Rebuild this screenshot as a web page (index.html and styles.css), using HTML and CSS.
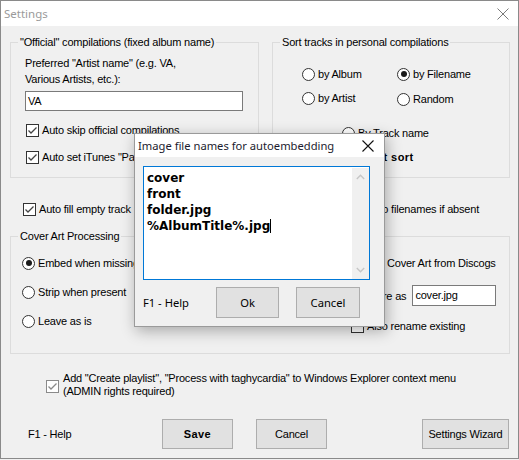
FILE: index.html
```html
<!DOCTYPE html>
<html>
<head>
<meta charset="utf-8">
<title>Settings</title>
<link rel="stylesheet" href="styles.css">
</head>
<body>
<div class="window">
  <div class="titlebar">
    <span class="title">Settings</span>
    <svg class="close" width="12" height="12" viewBox="0 0 12 12"><path d="M0.5 0.5 L11.5 11.5 M11.5 0.5 L0.5 11.5" stroke="#7a7a7a" stroke-width="1" fill="none"/></svg>
  </div>
  <div class="content">
    <div class="top-row">
      <fieldset class="group">
        <legend>"Official" compilations (fixed album name)</legend>
        <div class="body body-official">
          <div class="two-line">Preferred "Artist name" (e.g. VA,<br>Various Artists, etc.):</div>
          <div class="input input-artist">VA</div>
          <div class="check-row first"><span class="box"><svg width="11" height="11" viewBox="0 0 11 11"><path d="M1.5 5.5 L4 8 L9.5 2.5" stroke="#444" stroke-width="1.3" fill="none"/></svg></span><span>Auto skip official compilations</span></div>
          <div class="check-row"><span class="box"><svg width="11" height="11" viewBox="0 0 11 11"><path d="M1.5 5.5 L4 8 L9.5 2.5" stroke="#444" stroke-width="1.3" fill="none"/></svg></span><span>Auto set iTunes "Part of a compilation" flag</span></div>
        </div>
      </fieldset>
      <fieldset class="group">
        <legend>Sort tracks in personal compilations</legend>
        <div class="body body-sort">
          <div class="radio-grid">
            <div class="radio-row"><span class="radio"></span><span>by Album</span></div>
            <div class="radio-row"><span class="radio on"></span><span>by Filename</span></div>
            <div class="radio-row"><span class="radio"></span><span>by Artist</span></div>
            <div class="radio-row shift"><span class="radio"></span><span>Random</span></div>
          </div>
          <div class="radio-col">
            <div class="radio-row"><span class="radio"></span><span>By Track name</span></div>
            <div class="radio-row"><span class="radio"></span><b class="bold-label">Don't sort</b></div>
          </div>
        </div>
      </fieldset>
    </div>

    <div class="fill-row">
      <div class="check-row inline"><span class="box"><svg width="11" height="11" viewBox="0 0 11 11"><path d="M1.5 5.5 L4 8 L9.5 2.5" stroke="#444" stroke-width="1.3" fill="none"/></svg></span><span>Auto fill empty track</span></div>
      <span>Add track numbers to filenames if absent</span>
    </div>

    <fieldset class="group cover-group">
      <legend>Cover Art Processing</legend>
      <div class="body body-cover">
        <div class="cover-left">
          <div class="radio-row"><span class="radio on"></span><span>Embed when missing</span></div>
          <div class="radio-row"><span class="radio"></span><span>Strip when present</span></div>
          <div class="radio-row"><span class="radio"></span><span>Leave as is</span></div>
        </div>
        <div class="cover-right">
          <div class="check-row inline"><span class="box"></span><span>Get Cover Art from Discogs</span></div>
          <div class="store-row"><span>Store as</span><div class="input input-store">cover.jpg</div></div>
          <div class="check-row inline rename"><span class="box"></span><span>Also rename existing</span></div>
        </div>
      </div>
    </fieldset>

    <div class="explorer-row">
      <span class="box dim"><svg width="11" height="11" viewBox="0 0 11 11"><path d="M1.5 5.5 L4 8 L9.5 2.5" stroke="#8a8a8a" stroke-width="1.3" fill="none"/></svg></span>
      <span class="explorer-text">Add "Create playlist", "Process with taghycardia" to Windows Explorer context menu<br>(ADMIN rights required)</span>
    </div>

    <div class="button-row">
      <span class="help-main">F1 - Help</span>
      <div class="btn btn-save">Save</div>
      <div class="btn btn-cancel">Cancel</div>
      <div class="btn btn-wizard">Settings Wizard</div>
    </div>
  </div>

  <div class="dialog">
    <div class="dlg-title">
      <span>Image file names for autoembedding</span>
      <svg width="12" height="12" viewBox="0 0 12 12"><path d="M0.5 0.5 L11.5 11.5 M11.5 0.5 L0.5 11.5" stroke="#111" stroke-width="1.1" fill="none"/></svg>
    </div>
    <div class="dlg-body">
      <div class="textbox">
        <div class="text-lines">
          <div>cover</div>
          <div>front</div>
          <div>folder.jpg</div>
          <div>%AlbumTitle%.jpg<span class="caret"></span></div>
        </div>
        <div class="scrollbar">
          <div class="arrow"><svg width="9" height="6" viewBox="0 0 9 6"><path d="M0.8 5 L4.5 1.3 L8.2 5" stroke="#c6c6c6" stroke-width="1.4" fill="none"/></svg></div>
          <div class="arrow"><svg width="9" height="6" viewBox="0 0 9 6"><path d="M0.8 1 L4.5 4.7 L8.2 1" stroke="#c6c6c6" stroke-width="1.4" fill="none"/></svg></div>
        </div>
      </div>
      <div class="dlg-footer">
        <span class="dlg-help">F1 - Help</span>
        <div class="dbtn dbtn-ok">Ok</div>
        <div class="dbtn dbtn-cancel">Cancel</div>
      </div>
    </div>
  </div>
</div>
</body>
</html>
```

FILE: styles.css
```css
* { box-sizing: border-box; }

body {
  margin: 0;
  background: #f0f0f0;
  font-family: "Liberation Sans", Arial, sans-serif;
  font-size: 11px;
  letter-spacing: -0.2px;
  color: #000;
}

.window {
  position: relative;
  width: 519px;
  height: 459px;
  border: 1px solid #8a8a8a;
  background: #f0f0f0;
}

.titlebar {
  height: 25px;
  background: #fff;
  display: flex;
  align-items: center;
  justify-content: space-between;
  padding-left: 3px;
  padding-right: 9px;
}

.title {
  font-family: "Noto Sans", sans-serif;
  font-size: 11.5px;
  letter-spacing: 0;
  color: #9a9a9a;
}

.content {
  padding: 10px 8px 0 9px;
}

.top-row {
  display: grid;
  grid-template-columns: 249px 238px;
  column-gap: 13px;
}

fieldset.group {
  margin: 0;
  padding: 0;
  border: 1px solid #dcdcdc;
  min-width: 0;
}

fieldset.cover-group {
  margin-top: 13px;
}

legend {
  margin-left: 7px;
  padding: 0 2px;
  line-height: 13px;
}

.body-official {
  padding: 6px 0 12px 14px;
}

.two-line {
  line-height: 16px;
}

.input {
  background: #fff;
  border: 1px solid #7a7a7a;
  padding-left: 2px;
  line-height: 18px;
  height: 20px;
}

.input-artist {
  width: 218px;
  margin-top: 4px;
}

.check-row {
  display: flex;
  align-items: center;
  height: 16px;
  gap: 3px;
  margin-top: 11px;
  margin-left: 1px;
  white-space: nowrap;
}

.check-row.inline { margin-top: 0; margin-left: 0; }

.box {
  width: 13px;
  height: 13px;
  flex: none;
  border: 1px solid #333;
  background: #fff;
  display: flex;
  align-items: center;
  justify-content: center;
}

.box.dim { border-color: #8a8a8a; }

.body-sort {
  padding: 17px 0 12px 29px;
}

.radio-grid {
  display: grid;
  grid-template-columns: 95px auto;
  row-gap: 8px;
}

.radio-row {
  display: flex;
  align-items: center;
  gap: 3px;
  height: 16px;
  white-space: nowrap;
}

.radio-row.shift { position: relative; top: 1px; }

.radio {
  width: 13px;
  height: 13px;
  flex: none;
  border: 1px solid #333;
  border-radius: 50%;
  background: #fff;
  display: flex;
  align-items: center;
  justify-content: center;
}

.radio.on::after {
  content: "";
  width: 6px;
  height: 6px;
  border-radius: 50%;
  background: #1a1a1a;
}

.bold-label {
  letter-spacing: 0.4px;
}

.radio-col {
  margin-left: 40px;
  margin-top: 19px;
  display: flex;
  flex-direction: column;
  gap: 8px;
}

.fill-row {
  display: flex;
  align-items: center;
  justify-content: space-between;
  height: 16px;
  margin-top: 23px;
  padding-left: 13px;
  padding-right: 31px;
  white-space: nowrap;
}

.body-cover {
  display: grid;
  grid-template-columns: 329px auto;
  padding: 12px 0 19px 11px;
}

.cover-left {
  display: flex;
  flex-direction: column;
  gap: 13px;
}

.cover-right {
  display: flex;
  flex-direction: column;
}

.store-row {
  display: flex;
  align-items: center;
  gap: 6px;
  margin-top: 14px;
  padding-left: 16px;
}

.input-store {
  width: 84px;
  height: 21px;
  line-height: 19px;
}

.check-row.rename { margin-top: 12px; }

.explorer-row {
  display: flex;
  align-items: center;
  gap: 4px;
  margin-top: 18px;
  padding-left: 36px;
  line-height: 13px;
}

.explorer-row .box { position: relative; top: 1px; }

.button-row {
  display: flex;
  align-items: center;
  margin-top: 21px;
}

.help-main {
  width: 152px;
  padding-left: 18px;
}

.btn {
  height: 30px;
  background: #e1e1e1;
  border: 1px solid #adadad;
  display: flex;
  align-items: center;
  justify-content: center;
}

.btn-save {
  width: 71px;
  font-weight: bold;
  letter-spacing: 0.4px;
}

.btn-cancel {
  width: 71px;
  margin-left: 23px;
}

.btn-wizard {
  width: 87px;
  margin-left: auto;
  margin-right: 1px;
}

/* dialog */
.dialog {
  position: absolute;
  left: 133px;
  top: 132px;
  width: 251px;
  height: 194px;
  border: 1px solid #9a9a9a;
  background: #f0f0f0;
  box-shadow: 2px 4px 14px rgba(0, 0, 0, 0.3);
  font-family: "Noto Sans", sans-serif;
  font-size: 11.2px;
  letter-spacing: 0;
}

.dlg-title {
  height: 23px;
  background: #fff;
  display: flex;
  align-items: center;
  justify-content: space-between;
  padding-left: 3px;
  padding-right: 10px;
  color: #1b1b2e;
}

.dlg-body {
  padding: 9px 0 0 8px;
}

.textbox {
  width: 227px;
  height: 114px;
  border: 1px solid #0078d7;
  background: #fff;
  display: flex;
}

.text-lines {
  flex: 1;
  padding: 3px 3px;
  font-family: "DejaVu Sans", sans-serif;
  font-weight: bold;
  font-size: 12px;
  line-height: 16px;
  color: #000;
}

.caret {
  display: inline-block;
  width: 1px;
  height: 14px;
  background: #000;
  vertical-align: -3px;
}

.scrollbar {
  width: 17px;
  margin-top: 1px;
  background: #f0f0f0;
  display: flex;
  flex-direction: column;
  justify-content: space-between;
}

.arrow {
  height: 18px;
  display: flex;
  align-items: center;
  justify-content: center;
}

.dlg-footer {
  display: flex;
  align-items: center;
  margin-top: 7px;
}

.dlg-help {
  width: 73px;
}

.dbtn {
  height: 31px;
  background: #e1e1e1;
  border: 1px solid #adadad;
  display: flex;
  align-items: center;
  justify-content: center;
}

.dbtn-ok { width: 63px; }
.dbtn-cancel { width: 64px; margin-left: 17px; }
```
